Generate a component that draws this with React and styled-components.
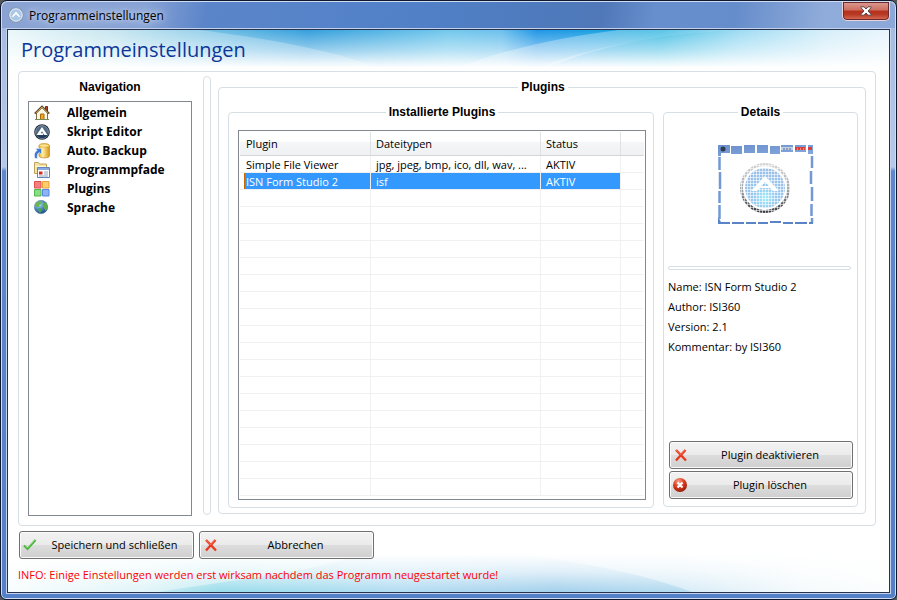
import React, { useState } from "react";
import styled, { createGlobalStyle } from "styled-components";

const GlobalStyle = createGlobalStyle`
    * {
        box-sizing: border-box;
    }
    body {
        margin: 0;
        background: #55565a;
        font-family: "Open Sans", "Noto Sans", sans-serif;
        font-size: 11px;
        color: #000;
    }
    button {
        font-family: inherit;
        font-size: inherit;
        color: inherit;
    }
`;
const Window = styled.div`
    display: flex;
    flex-direction: column;
    min-height: 100vh;
    padding: 0 5px 5px;
    border: 1px solid #10182e;
    border-radius: 7px 7px 6px 6px;
    box-shadow: inset 0 0 0 1px #cfdcf2;
    background: linear-gradient(#a3b9df 0, #b5c9ea 166px, #5f88cc 170px, #5480c8 100%);
`;
const TitleBar = styled.header`
    display: flex;
    align-items: flex-start;
    height: 26px;
    margin: 1px -4px 0;
    padding-left: 6px;
    border-radius: 6px 6px 0 0;
    background: linear-gradient(
        100deg,
        #8aa3d3 0,
        #87a2d5 16%,
        #5b85c9 23%,
        #5281c8 45%,
        #4e7abc 62%,
        #5078b8 67%,
        #678fce 73%,
        #668dcb 82%,
        #90acda 92%,
        #8ba8d8 100%
    );
`;
const TitleText = styled.div`
    display: flex;
    align-items: center;
    gap: 5px;
    height: 26px;
    font-size: 12px;
    text-shadow: 0 0 4px #c3d2ec, 0 0 8px #c3d2ec, 0 0 12px #c3d2ec;
`;
const CloseBtn = styled.button`
    display: flex;
    align-items: center;
    justify-content: center;
    width: 48px;
    height: 19px;
    margin-left: auto;
    margin-right: 5px;
    padding: 0;
    border: 1px solid #e8d3d8;
    border-top: none;
    border-radius: 0 0 5px 5px;
    box-shadow: inset 0 0 0 1px #6b2a2e;
    background: linear-gradient(#dd9c93 0, #cc6e60 45%, #b5301c 50%, #b93a26 70%, #d9705a 100%);
`;
const Client = styled.main`
    position: relative;
    z-index: 0;
    display: flex;
    flex: 1;
    flex-direction: column;
    padding: 0 13px 9px 10px;
    border: 1px solid #26324e;
    outline: 1px solid #c3d2ec;
    margin: 1px;
    background: #fff;
`;
const TopWave = styled.svg`
    position: absolute;
    z-index: -1;
    top: 0;
    left: 0;
    width: 100%;
    height: 42px;
`;
const BottomWave = styled(TopWave)`
    top: auto;
    bottom: 0;
    height: 40px;
`;
const Heading = styled.h1`
    margin: 0 0 0 3px;
    height: 41px;
    font-size: 20px;
    font-weight: 400;
    line-height: 40px;
    color: #0b3799;
`;
const Panel = styled.div`
    display: flex;
    flex: 1;
    padding: 7px 9px 9px;
    border: 1px solid #d5dfe5;
    border-radius: 4px;
    background: #fff;
`;
const Nav = styled.nav`
    display: flex;
    flex-direction: column;
    width: 164px;
`;
const NavTitle = styled.h2`
    margin: 0 0 6px;
    font-family: "Liberation Sans", sans-serif;
    font-size: 12px;
    line-height: 16px;
    text-align: center;
`;
const NavList = styled.ul`
    flex: 1;
    margin: 0;
    padding: 1px 5px;
    border: 1px solid #828790;
    list-style: none;
`;
const NavItem = styled.button`
    display: flex;
    align-items: center;
    gap: 17px;
    width: 100%;
    height: 19px;
    padding: 0;
    border: none;
    background: none;
    font-size: 12px;
    font-weight: 700;
`;
const Splitter = styled.div`
    width: 8px;
    margin: -3px 7px 1px 11px;
    border: 1px solid #d5dfe5;
    border-radius: 4px;
`;
const Group = styled.fieldset`
    display: flex;
    flex: ${(props) => props.$flex || "1"};
    flex-direction: ${(props) => props.$direction || "column"};
    gap: ${(props) => props.$gap || "0"};
    min-width: 0;
    margin: ${(props) => props.$margin || "0"};
    padding: ${(props) => props.$padding};
    border: 1px solid #d5dfe5;
    border-radius: 4px;
`;
const Legend = styled.legend`
    margin: 0 auto;
    padding: 0 3px;
    font-family: "Liberation Sans", sans-serif;
    font-size: 12px;
    font-weight: 700;
    line-height: 16px;
`;
const TableFrame = styled.div`
    flex: 1;
    padding: 1px;
    border: 1px solid #828790;
    background: #fff;
`;
const Table = styled.table`
    width: 100%;
    table-layout: fixed;
    border-collapse: separate;
    border-spacing: 0;
`;
const Th = styled.th`
    width: ${(props) => props.$width || "auto"};
    height: 24px;
    padding: 0 5px;
    border-right: 1px solid ${(props) => (props.$last ? "transparent" : "#dfe1e4")};
    border-bottom: 1px solid #d5d5d5;
    background: linear-gradient(#fff 0, #fff 40%, #f5f6f8 45%, #f0f1f3 100%);
    font-weight: 400;
    text-align: left;
    &:first-child {
        padding-left: 6px;
    }
`;
const Td = styled.td`
    height: 17px;
    padding: 2px 5px 0;
    border-right: 1px solid ${(props) => (props.$last ? "transparent" : "#f0f0f0")};
    border-bottom: 1px solid #f0f0f0;
    line-height: 14px;
    white-space: nowrap;
    &:first-child {
        padding-left: 6px;
    }
`;
const Row = styled.tr`
    ${(props) =>
        props.$selected &&
        `
        color: #fff;
        ${Td}:not(:last-child) {
            background: #3399ff;
            background-clip: padding-box;
        }
        ${Td}:first-child {
            background: linear-gradient(90deg, #fff 4px, #cc6600 4px, #cc6600 5px, #3399ff 5px);
            background-clip: padding-box;
        }
    `}
`;
const Preview = styled.svg`
    align-self: center;
    width: 97px;
    height: 81px;
    margin: 24px 0 41px 9px;
`;
const Divider = styled.hr`
    height: 4px;
    margin: 0 2px 7px 0;
    border: 1px solid #d5dfe5;
    border-radius: 2px;
`;
const InfoLine = styled.p`
    margin: 0;
    line-height: 20px;
`;
const ButtonStack = styled.div`
    display: flex;
    flex-direction: column;
    gap: 2px;
    margin-top: auto;
    margin-left: 1px;
`;
const Button = styled.button`
    display: flex;
    align-items: center;
    width: ${(props) => props.$width || "100%"};
    height: 28px;
    padding: 0 1px 1px 3px;
    border: 1px solid #707070;
    border-radius: 3px;
    box-shadow: inset 0 0 0 1px #fafafa;
    background: linear-gradient(#f2f2f2 0, #ebebeb 48%, #dddddd 50%, #cfcfcf 100%);
    span {
        flex: 1;
        text-align: center;
    }
`;
const Footer = styled.footer`
    display: flex;
    gap: 5px;
    margin: 5px 0 8px 1px;
`;
const Notice = styled.p`
    margin: 0;
    line-height: 16px;
    color: #ff0000;
`;

const HomeIcon = () => (
    <svg width="16" height="16" viewBox="0 0 16 16">
        <path d="M11.5 1.5h2v5l-2-2z" fill="#b5482d" stroke="#6a2a1c" />
        <path d="M2.5 8v6.5h11V8L8 2.5z" fill="#fbf6e2" stroke="#7b6b48" />
        <path d="M.8 8.6L8 1.6l7.2 7" fill="none" stroke="#4e3d27" strokeWidth="2" />
        <path d="M1.5 8.2L8 2l6.5 6.2" fill="none" stroke="#e0b25a" strokeWidth=".9" />
        <path d="M6.5 9H10v5.500H6.500z" fill="#f2a51c" stroke="#a86a10" />
        <path d="M1 14.5h14" stroke="#788a55" />
    </svg>
);
const AutoItIcon = () => (
    <svg width="16" height="16" viewBox="0 0 16 16">
        <circle cx="8" cy="8" r="7.800" fill="#222c38" />
        <circle cx="8" cy="8" r="6.400" fill="#4f6982" stroke="#9fb2c2" strokeWidth=".7" />
        <path d="M2 9.500a6.200 6.200 0 0 0 12 0z" fill="#1f3c5c" />
        <path d="M2.500 11L8 3l5.500 8h-3L8 7.200 6.700 9.200h2.600V11z" fill="#fff" />
    </svg>
);
const BackupIcon = () => (
    <svg width="16" height="16" viewBox="0 0 16 16">
        <defs>
            <linearGradient id="gold">
                <stop offset="0" stopColor="#e9a823" />
                <stop offset=".35" stopColor="#fff0a5" />
                <stop offset="1" stopColor="#d89412" />
            </linearGradient>
        </defs>
        <path d="M5 2.500c0-2.500 10.500-2.500 10.500 0v10.500c0 2.500-10.500 2.500-10.500 0z" fill="url(#gold)" stroke="#c68a1a" strokeWidth=".7" />
        <ellipse cx="10.200" cy="2.600" rx="4.800" ry="1.600" fill="#ffe690" stroke="#cf982b" strokeWidth=".5" />
        <path d="M1 15.500c-1.500-4 0-7 2.200-8L1.500 5.500h6v6l-2-2c-2 .8-2.500 2.500-2 6z" fill="#3c7ad8" stroke="#fff" strokeWidth=".5" />
    </svg>
);
const PathsIcon = () => (
    <svg width="16" height="16" viewBox="0 0 16 16">
        <path d="M.5 11.500V.5h4l1 1.500h7v9.500z" fill="#f2e3a6" stroke="#c0a45b" />
        <path d="M1 4.500h11" stroke="#fff8d8" />
        <path d="M3.500 5.500h12v10h-12z" fill="#fff" stroke="#6585b8" />
        <path d="M4 6h11v2H4z" fill="#86abe0" />
        <path d="M5 9.500h3.500v3H5z" fill="#d52c20" />
        <path d="M10 10h4M10 12h4M5 14h9" stroke="#8ea2c0" />
    </svg>
);
const PluginsIcon = () => (
    <svg width="16" height="16" viewBox="0 0 16 16">
        <path d="M.5.5H7V7H.5z" fill="#f37f7e" stroke="#e14f52" />
        <path d="M8.500.5H15V7H8.500z" fill="#fccc70" stroke="#e9a238" />
        <path d="M.5 8.500H7V15H.5z" fill="#8ade82" stroke="#52b64e" />
        <path d="M8.500 8.500H15V15H8.500z" fill="#8db3f5" stroke="#5585e2" />
    </svg>
);
const GlobeIcon = () => (
    <svg width="16" height="16" viewBox="0 0 16 16">
        <defs>
            <radialGradient id="sea" cx=".35" cy=".3" r=".75">
                <stop offset="0" stopColor="#bfe0f5" />
                <stop offset=".5" stopColor="#4d8dc8" />
                <stop offset="1" stopColor="#1c4a86" />
            </radialGradient>
        </defs>
        <circle cx="7" cy="7" r="6.700" fill="url(#sea)" stroke="#5378a0" strokeWidth=".5" />
        <path d="M2 3l3-2 3 .5L7 4 5 5l.5 2L3 7 1 6z" fill="#68b551" />
        <path d="M4.500 8l3 .5L8 10l-2 3-1.500-2z" fill="#53a340" />
        <path d="M9 3l3-.5 1.500 3v3L11.500 11 10 8 8.500 6z" fill="#5fb04a" />
    </svg>
);
const CheckIcon = () => (
    <svg width="14" height="14" viewBox="0 0 14 14">
        <path d="M1 7.500L4.500 11 12.500 2" fill="none" stroke="#49b43c" strokeWidth="2.200" />
        <path d="M2 7.500L4.500 10 12 1.800" fill="none" stroke="#8fdc7c" strokeWidth=".8" />
    </svg>
);
const CrossIcon = () => (
    <svg width="16" height="14" viewBox="0 0 16 14">
        <path d="M3 2l10 10.500M12.500 2L3 12.500" fill="none" stroke="#e8391f" strokeWidth="2.400" />
        <path d="M3 2l4.500 5L12 2.200" fill="none" stroke="#ff7a5c" strokeWidth=".8" />
    </svg>
);
const DeleteIcon = () => (
    <svg width="16" height="16" viewBox="0 0 16 16">
        <defs>
            <radialGradient id="red" cx=".4" cy=".25" r=".8">
                <stop offset="0" stopColor="#f7a08a" />
                <stop offset=".5" stopColor="#dc3a1c" />
                <stop offset="1" stopColor="#8e1a0a" />
            </radialGradient>
        </defs>
        <circle cx="7" cy="8" r="7" fill="url(#red)" />
        <path d="M4.500 5.500l5 5M9.500 5.500l-5 5" stroke="#fff" strokeWidth="2.200" />
    </svg>
);

const WindowIcon = () => (
    <svg width="16" height="16" viewBox="0 0 16 16">
        <circle cx="8" cy="8" r="7.200" fill="#a9c8e6" stroke="#8595a8" />
        <circle cx="8" cy="8" r="6.200" fill="none" stroke="#e6eff8" />
        <path d="M3.500 9.800L8 4.500l4.500 5.300h-2L8 7.200 5.500 9.800z" fill="#fff" />
    </svg>
);

const PluginPreview = () => (
    <Preview viewBox="0 0 97 81" role="img" aria-label="ISN Form Studio 2">
        <defs>
            <radialGradient id="orb" cx=".5" cy=".75" r=".7">
                <stop offset="0" stopColor="#a2eefa" />
                <stop offset=".4" stopColor="#98c8f0" />
                <stop offset="1" stopColor="#9cc0e8" />
            </radialGradient>
            <linearGradient id="rim" x2="0" y2="1">
                <stop offset="0" stopColor="#d2d2d2" />
                <stop offset=".5" stopColor="#a8abb0" />
                <stop offset="1" stopColor="#3e4248" />
            </linearGradient>
            <linearGradient id="tile" x2="1" y2="1">
                <stop offset="0" stopColor="#6a8fcb" />
                <stop offset="1" stopColor="#88aae0" />
            </linearGradient>
            <pattern id="mesh" width="3" height="3" patternUnits="userSpaceOnUse">
                <path d="M0 .5h3M.5 0v3" stroke="#fff" strokeWidth=".9" strokeOpacity=".65" />
            </pattern>
        </defs>
        <path
            d="M1 1h12v8H4v3H1zM14 2h11v8H14zM27 1h11v8H27zM40 1h11v8H40zM53 2h10v8H53zM64 1h12v7H64zM78 1h11v7H78zM91 1h5v9h-5z"
            fill="url(#tile)"
        />
        <path d="M64 3h12v3H64z" fill="#c4d0e3" />
        <path d="M66 5h9" stroke="#536a94" strokeDasharray="2 1" />
        <path d="M78 3h10v3H78zM91 3h4v3h-4z" fill="#d9403c" />
        <path d="M80 5h7" stroke="#f6d5d3" strokeDasharray="1 2" />
        <circle cx="6" cy="5" r="2.500" fill="#2e3b50" />
        <path
            d="M2.500 13v13M3 28v17M2.500 47v12M2.500 61v14M95 12v12M94 27v13M95 43v14M94.500 60v12M95 74v5"
            stroke="#7398d2"
            strokeWidth="2.500"
            fill="none"
        />
        <path
            d="M1 73l3 5h9v2H1zM15 78h12v2H15zM29 78h10v2H29zM41 78h10v2H41zM53 77h11v2H53zM66 78h10v2H66zM78 78h12v2H78zM92 78h4v2h-4z"
            fill="#5a84c8"
        />
        <circle cx="48" cy="44" r="23.500" fill="#fff" stroke="url(#rim)" strokeWidth="3" />
        <circle cx="48" cy="44" r="20" fill="url(#orb)" />
        <circle cx="48" cy="44" r="26" fill="url(#mesh)" />
        <path d="M34 47L48 32l14 15h-6l-3-3H43l-3 3zM48 38l-4 4h8z" fill="#fff" fillRule="evenodd" />
    </Preview>
);

const navItems = [
    { name: "Allgemein", icon: <HomeIcon /> },
    { name: "Skript Editor", icon: <AutoItIcon /> },
    { name: "Auto. Backup", icon: <BackupIcon /> },
    { name: "Programmpfade", icon: <PathsIcon /> },
    { name: "Plugins", icon: <PluginsIcon /> },
    { name: "Sprache", icon: <GlobeIcon /> },
];
const plugins = [
    { name: "Simple File Viewer", types: "jpg, jpeg, bmp, ico, dll, wav, ...", status: "AKTIV" },
    { name: "ISN Form Studio 2", types: "isf", status: "AKTIV" },
];
const emptyRows = Array.from({ length: 18 });

function App() {
    const [selected, setSelected] = useState(1);
    return (
        <>
            <GlobalStyle />
            <Window>
                <TitleBar>
                    <TitleText>
                        <WindowIcon />
                        Programmeinstellungen
                    </TitleText>
                    <CloseBtn aria-label="Schließen">
                        <svg width="12" height="10" viewBox="0 0 12 10">
                            <path
                                d="M1 .8h3l2 2.200L8 .8h3v1L8 5l3 3.200v1H8L6 7 4 9.200H1v-1L4 5 1 1.800z"
                                fill="#fff"
                                stroke="#5d4448"
                            />
                        </svg>
                    </CloseBtn>
                </TitleBar>
                <Client>
                    <TopWave viewBox="0 0 881 42" preserveAspectRatio="none">
                        <defs>
                            <linearGradient id="sky">
                                <stop offset="0" stopColor="#e3f5f8" />
                                <stop offset=".12" stopColor="#b5deeb" />
                                <stop offset=".24" stopColor="#6bbde4" />
                                <stop offset=".34" stopColor="#359fdc" />
                                <stop offset=".5" stopColor="#72c8ec" />
                                <stop offset=".56" stopColor="#6cc0ec" />
                                <stop offset=".6" stopColor="#2196e6" />
                                <stop offset=".74" stopColor="#12acdc" />
                                <stop offset=".83" stopColor="#7fd0ef" />
                                <stop offset=".93" stopColor="#c8e9f7" />
                                <stop offset="1" stopColor="#e2f2fb" />
                            </linearGradient>
                            <linearGradient id="fade" x2="0" y2="1">
                                <stop offset="0" stopColor="#fff" stopOpacity="0" />
                                <stop offset=".5" stopColor="#fff" stopOpacity=".5" />
                                <stop offset=".9" stopColor="#fff" />
                            </linearGradient>
                        </defs>
                        <path d="M0 0h881v42H0z" fill="url(#sky)" />
                        <path d="M192 0c60 8 130 18 190 42H0V0z" fill="#fff" opacity=".25" />
                        <path d="M440 42C490 20 550 8 610 0h116C650 6 590 14 530 42z" fill="#fff" opacity=".3" />
                        <path d="M520 42C580 16 650 6 726 0h155v42z" fill="#fff" opacity=".25" />
                        <path d="M0 0h881v42H0z" fill="url(#fade)" />
                    </TopWave>
                    <BottomWave viewBox="0 0 881 40" preserveAspectRatio="none">
                        <defs>
                            <linearGradient id="sea2">
                                <stop offset="0" stopColor="#f3fbfc" />
                                <stop offset=".16" stopColor="#c9edf4" />
                                <stop offset=".24" stopColor="#98dcea" />
                                <stop offset=".45" stopColor="#b3dcf2" />
                                <stop offset=".62" stopColor="#a3d0ec" />
                                <stop offset=".76" stopColor="#b4dbf0" />
                                <stop offset=".9" stopColor="#ecf6fa" />
                                <stop offset="1" stopColor="#fafcfd" />
                            </linearGradient>
                            <linearGradient id="fade2" x2="0" y2="1">
                                <stop offset=".05" stopColor="#fff" />
                                <stop offset=".5" stopColor="#fff" stopOpacity=".65" />
                                <stop offset="1" stopColor="#fff" stopOpacity="0" />
                            </linearGradient>
                        </defs>
                        <path d="M0 0h881v40H0z" fill="url(#sea2)" />
                        <path d="M150 40c70-12 150-18 210-40H0v40z" fill="#fff" opacity=".4" />
                        <path d="M500 0c70 10 130 20 184 40h197V0z" fill="#fff" opacity=".45" />
                        <path d="M0 0h881v40H0z" fill="url(#fade2)" />
                    </BottomWave>
                    <Heading>Programmeinstellungen</Heading>
                    <Panel>
                        <Nav>
                            <NavTitle>Navigation</NavTitle>
                            <NavList>
                                {navItems.map((item) => (
                                    <li key={item.name}>
                                        <NavItem>
                                            {item.icon}
                                            {item.name}
                                        </NavItem>
                                    </li>
                                ))}
                            </NavList>
                        </Nav>
                        <Splitter />
                        <Group $direction="row" $gap="9px" $margin="0 0 2px" $padding="9px 7px 5px 9px">
                            <Legend>Plugins</Legend>
                            <Group $padding="10px 7px 7px 9px">
                                <Legend>Installierte Plugins</Legend>
                                <TableFrame>
                                    <Table>
                                        <thead>
                                            <tr>
                                                <Th $width="131px">Plugin</Th>
                                                <Th $width="170px">Dateitypen</Th>
                                                <Th $width="80px">Status</Th>
                                                <Th $last />
                                            </tr>
                                        </thead>
                                        <tbody>
                                            {plugins.map((plugin, i) => (
                                                <Row
                                                    key={plugin.name}
                                                    $selected={i === selected}
                                                    onClick={() => setSelected(i)}
                                                >
                                                    <Td>{plugin.name}</Td>
                                                    <Td>{plugin.types}</Td>
                                                    <Td>{plugin.status}</Td>
                                                    <Td $last />
                                                </Row>
                                            ))}
                                            {emptyRows.map((_, i) => (
                                                <Row key={i}>
                                                    <Td />
                                                    <Td />
                                                    <Td />
                                                    <Td $last />
                                                </Row>
                                            ))}
                                        </tbody>
                                    </Table>
                                </TableFrame>
                            </Group>
                            <Group $flex="0 0 195px" $margin="0 0 1px" $padding="0 4px 7px">
                                <Legend>Details</Legend>
                                <PluginPreview />
                                <Divider />
                                <InfoLine>Name: ISN Form Studio 2</InfoLine>
                                <InfoLine>Author: ISI360</InfoLine>
                                <InfoLine>Version: 2.1</InfoLine>
                                <InfoLine>Kommentar: by ISI360</InfoLine>
                                <ButtonStack>
                                    <Button>
                                        <CrossIcon />
                                        <span>Plugin deaktivieren</span>
                                    </Button>
                                    <Button>
                                        <DeleteIcon />
                                        <span>Plugin löschen</span>
                                    </Button>
                                </ButtonStack>
                            </Group>
                        </Group>
                    </Panel>
                    <Footer>
                        <Button $width="175px">
                            <CheckIcon />
                            <span>Speichern und schließen</span>
                        </Button>
                        <Button $width="175px">
                            <CrossIcon />
                            <span>Abbrechen</span>
                        </Button>
                    </Footer>
                    <Notice>INFO: Einige Einstellungen werden erst wirksam nachdem das Programm neugestartet wurde!</Notice>
                </Client>
            </Window>
        </>
    );
}

export default App;
